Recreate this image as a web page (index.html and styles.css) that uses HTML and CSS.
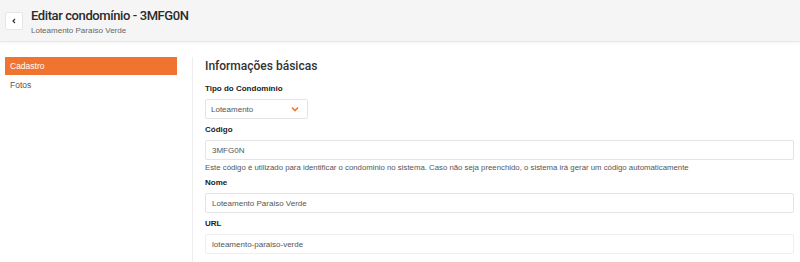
FILE: index.html
```html
<!DOCTYPE html>
<html lang="pt-BR">
<head>
  <meta charset="UTF-8">
  <meta name="viewport" content="width=device-width, initial-scale=1.0">
  <title>Editar condomínio - 3MFG0N</title>
  <link rel="stylesheet" href="styles.css">
</head>
<body>
  <!-- Cabeçalho -->
  <header class="topbar">
    <button class="back-btn" type="button" aria-label="Voltar">
      <svg width="6" height="6" viewBox="0 0 6 6"><path d="M4 1 L2 3 L4 5" fill="none" stroke="#333" stroke-width="1.2"/></svg>
    </button>
    <div class="titles">
      <h1>Editar condomínio - 3MFG0N</h1>
      <p class="subtitle">Loteamento Paraíso Verde</p>
    </div>
  </header>

  <div class="layout">
    <!-- Menu lateral -->
    <nav class="sidenav">
      <a class="nav-item active" href="#">Cadastro</a>
      <a class="nav-item" href="#">Fotos</a>
    </nav>

    <!-- Formulário -->
    <main class="content">
      <h2>Informações básicas</h2>

      <div class="field">
        <label>Tipo do Condomínio</label>
        <div class="select">
          <span>Loteamento</span>
          <svg width="8" height="6" viewBox="0 0 8 6"><path d="M1 1.5 L4 4.5 L7 1.5" fill="none" stroke="#f07430" stroke-width="1.6"/></svg>
        </div>
      </div>

      <div class="field">
        <label>Código</label>
        <input type="text" value="3MFG0N">
        <small>Este código é utilizado para identificar o condominio no sistema. Caso não seja preenchido, o sistema irá gerar um código automaticamente</small>
      </div>

      <div class="field">
        <label>Nome</label>
        <input type="text" value="Loteamento Paraiso Verde">
      </div>

      <div class="field">
        <label>URL</label>
        <input type="text" class="soft" value="loteamento-paraiso-verde">
      </div>
    </main>
  </div>
</body>
</html>
```

FILE: styles.css
```css
body {
  margin: 0;
  font-family: 'Liberation Sans', Arial, sans-serif;
  color: #333;
  background-color: white;
  overflow: hidden;
}
.topbar {
  display: flex;
  align-items: center;
  gap: 8px;
  height: 42px;
  padding: 0 5px;
  box-sizing: border-box;
  background-color: #f5f5f5;
  border-bottom: 1px solid #e8e8e8;
  box-shadow: 0 1px 3px rgba(0, 0, 0, 0.05);
}
.back-btn {
  width: 18px;
  height: 18px;
  padding: 0;
  display: flex;
  align-items: center;
  justify-content: center;
  background-color: white;
  border: 1px solid #e6e6e6;
  border-radius: 2px;
}
.titles h1 {
  margin: 0;
  font-family: Roboto, 'Liberation Sans', sans-serif;
  font-size: 13px;
  font-weight: 500;
  letter-spacing: -0.4px;
  color: #2b2b2b;
  line-height: 18px;
}
.subtitle {
  margin: 1px 0 0;
  font-size: 8px;
  color: #666;
}
.layout {
  display: flex;
  padding-top: 15px;
}
.sidenav {
  width: 172px;
  margin-left: 5px;
  padding-right: 15px;
  border-right: 1px solid #eeeeee;
  min-height: 210px;
}
.nav-item {
  display: block;
  height: 18px;
  line-height: 18px;
  padding-left: 5px;
  font-size: 8.5px;
  color: #555;
  text-decoration: none;
}
.nav-item.active {
  background-color: #f07430; /* laranja */
  color: white;
  margin-bottom: 1px;
}
.content {
  flex: 1;
  padding: 0 6px 0 12px;
}
.content h2 {
  margin: 2px 0 11px;
  font-family: Roboto, 'Liberation Sans', sans-serif;
  font-size: 12px;
  font-weight: 500;
  color: #333;
}
.field {
  margin-bottom: 6px;
}
.field label {
  display: block;
  font-size: 8px;
  font-weight: bold;
  color: #222;
  margin-bottom: 6px;
}
.select {
  width: 103px;
  height: 20px;
  padding: 0 8px 0 5px;
  box-sizing: border-box;
  display: flex;
  align-items: center;
  justify-content: space-between;
  border: 1px solid #e4e4e4;
  border-radius: 2px;
  font-size: 8px;
  color: #555;
}
input {
  display: block;
  width: 100%;
  height: 20px;
  box-sizing: border-box;
  padding: 0 6px;
  border: 1px solid #e4e4e4;
  border-radius: 2px;
  font-family: inherit;
  font-size: 8px;
  color: #555;
}
input.soft {
  border-color: #efefef;
}
small {
  display: block;
  margin-top: 3px;
  font-size: 7.8px;
  color: #555;
}
```
